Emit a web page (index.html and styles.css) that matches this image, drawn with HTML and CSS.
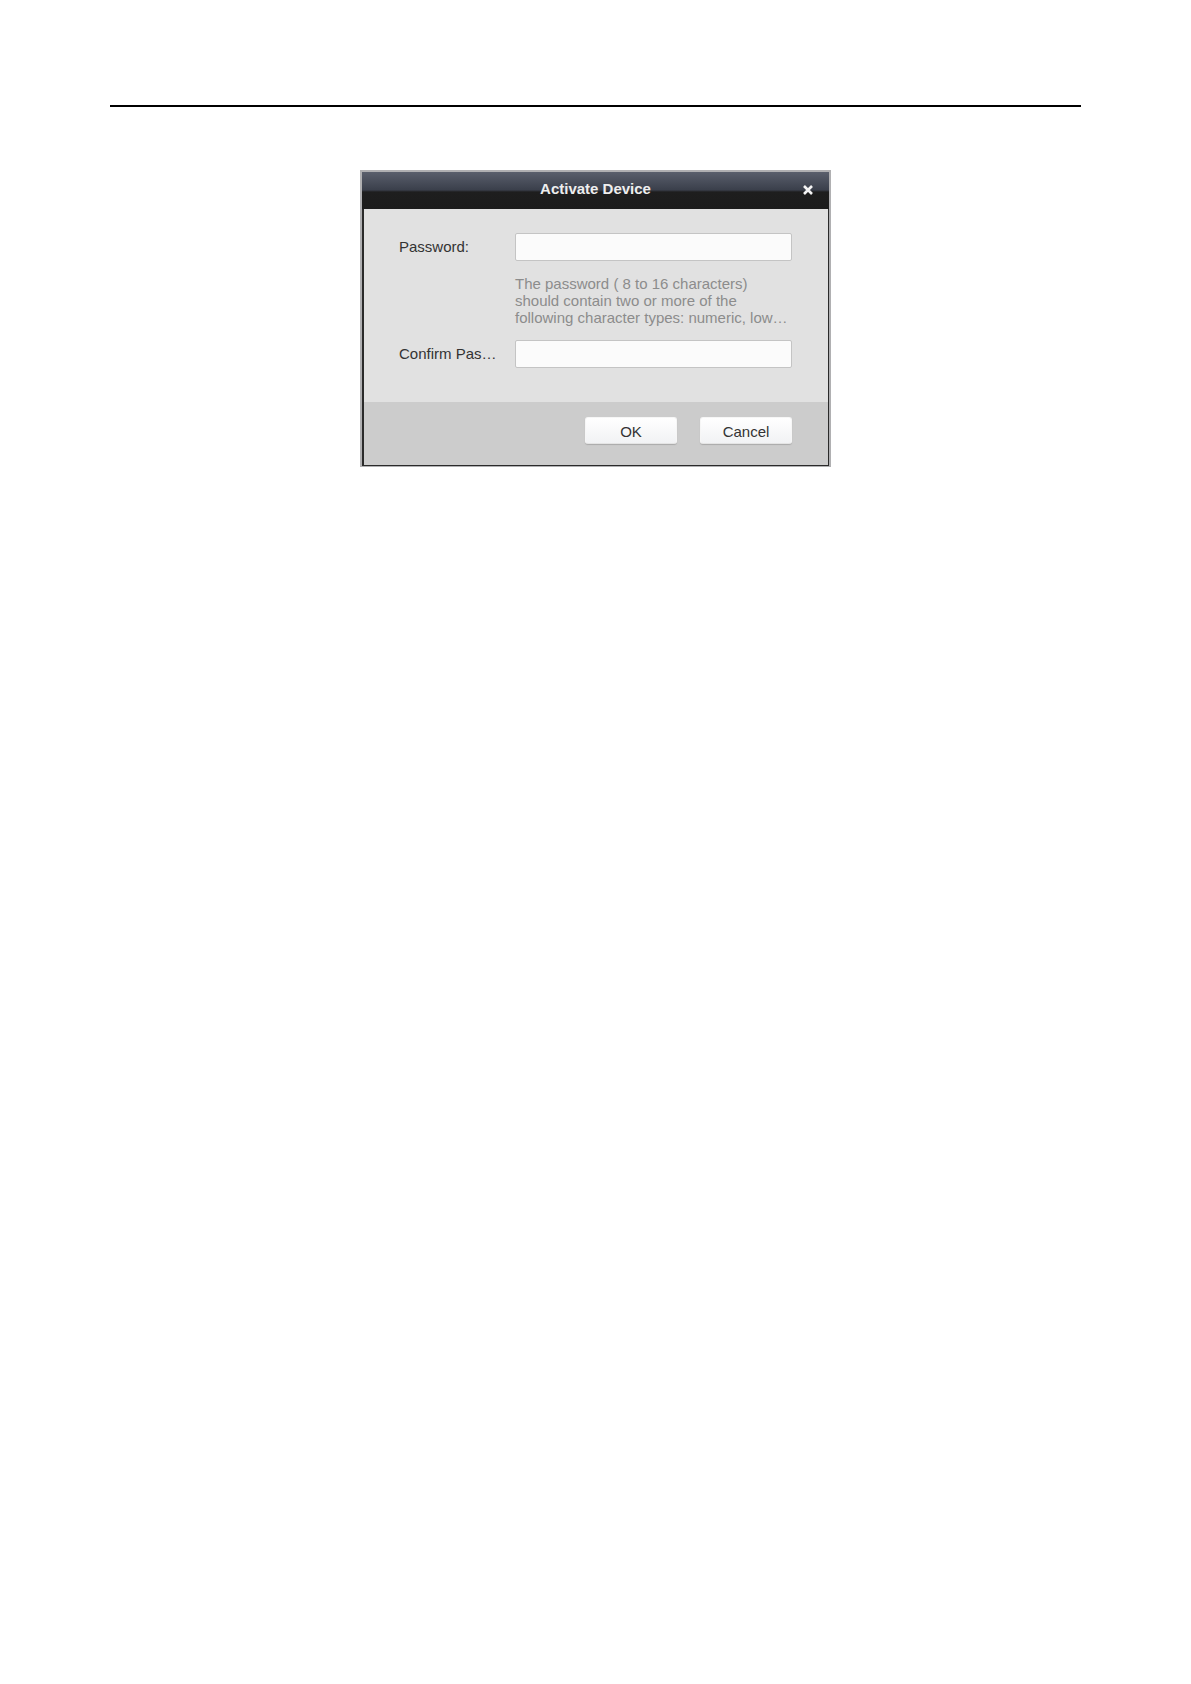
FILE: index.html
```html
<!DOCTYPE html>
<html lang="en">
<head>
<meta charset="utf-8">
<title>Activate Device</title>
<link rel="stylesheet" href="styles.css">
</head>
<body>
<main class="page">
  <hr class="rule">
  <div class="frame">
    <form class="dialog" role="dialog" aria-labelledby="dialog-title">
      <header class="titlebar">
        <h1 class="title" id="dialog-title">Activate Device</h1>
        <button class="close" type="button" aria-label="Close">
          <svg width="10" height="10" viewBox="0 0 10 10" aria-hidden="true"><path d="M1 1L9 9M9 1L1 9" stroke="#f4f4f4" stroke-width="2.6"/></svg>
        </button>
      </header>
      <div class="fields">
        <label class="label" for="password">Password:</label>
        <input class="input" id="password" type="password" aria-describedby="hint">
        <p class="hint" id="hint">The password ( 8 to 16 characters)<br>should contain two or more of the<br>following character types: numeric, low…</p>
        <label class="label" for="confirm">Confirm Pas…</label>
        <input class="input" id="confirm" type="password">
      </div>
      <footer class="actions">
        <button class="button" type="submit">OK</button>
        <button class="button" type="button">Cancel</button>
      </footer>
    </form>
  </div>
</main>
</body>
</html>
```
FILE: styles.css
```css
* {
  box-sizing: border-box;
}

body {
  margin: 0;
  background: #fff;
  color: #333;
  font: 15px/17px "Liberation Sans", Arial, sans-serif;
}

.page {
  padding: 105px 110px 64px;
}

.rule {
  height: 2px;
  margin: 0 0 63px;
  border: 0;
  background: #000;
}

.frame {
  max-width: 471px;
  margin: 0 auto;
  border: solid #b0b0b2;
  border-width: 2px 2px 1px;
}

.dialog {
  border: solid #2a2a2a;
  border-width: 0 1px 1px 2px;
  background: #e1e1e1;
}

.titlebar {
  display: grid;
  grid-template-columns: 1fr auto 1fr;
  align-items: center;
  height: 37px;
  margin: 0 -1px 0 -2px;
  padding: 0 16px 4px;
  background: linear-gradient(#5a5f6c 0, #3a3f4b 18px, #1e1e1e 20px, #1c1c1c 100%);
}

.title {
  grid-column: 2;
  margin: 0;
  color: #eee;
  font-size: 15px;
  line-height: 17px;
}

.close {
  display: flex;
  justify-self: end;
  padding: 2px 0 0;
  border: 0;
  background: none;
}

.fields {
  display: grid;
  grid-template-columns: 116px 1fr;
  align-items: center;
  padding: 24px 36px 34px 35px;
}

.label {
  padding-bottom: 2px;
}

.input {
  width: 100%;
  height: 28px;
  padding: 0 6px;
  border: 1px solid #c4c4c4;
  border-radius: 2px;
  background: #fbfbfb;
  font: inherit;
}

.hint {
  grid-column: 2;
  margin: 14px 0;
  color: #8c8c8c;
  white-space: nowrap;
}

.actions {
  display: flex;
  justify-content: flex-end;
  gap: 23px;
  padding: 15px 36px 21px;
  background: #ccc;
}

.button {
  width: 92px;
  height: 27px;
  padding: 2px 0 0;
  border: 1px solid #f6f6f6;
  border-bottom-color: #e4e4e4;
  border-radius: 3px;
  background: linear-gradient(#fff, #f1f2f4);
  box-shadow: 0 1px 1px #aaa;
  color: #333;
  font: inherit;
}
```
